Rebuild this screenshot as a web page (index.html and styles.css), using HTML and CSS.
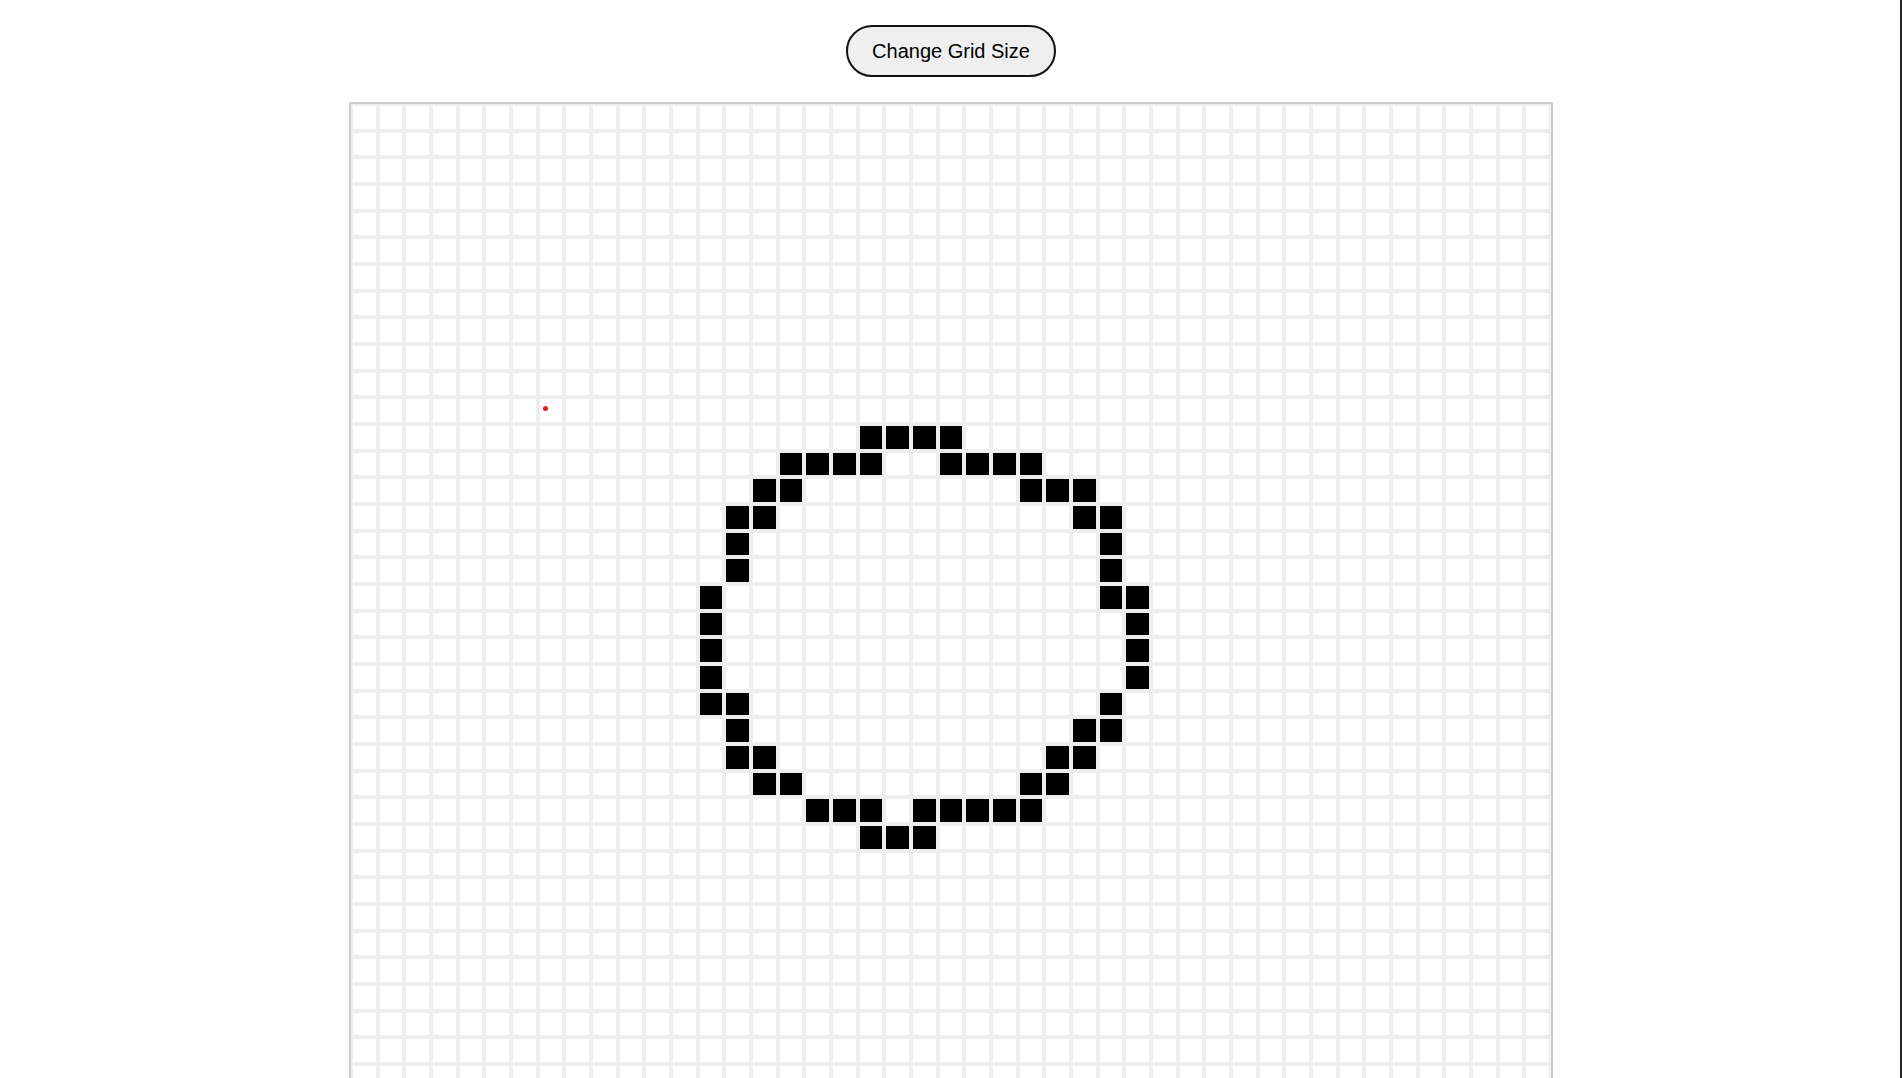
FILE: index.html
```html
<!DOCTYPE html>
<html lang="en">
<head>
<meta charset="utf-8">
<title>Etch a Sketch</title>
<link rel="stylesheet" href="styles.css">
</head>
<body>
<main class="app">
  <button class="size-btn" type="button">Change Grid Size</button>
  <div class="board">
    <div class="grid" id="grid"></div>
    <span class="cursor-dot"></span>
  </div>
</main>
<div class="edge-line"></div>
<script src="script.js"></script>
</body>
</html>
```

FILE: styles.css
```css
body {
  margin: 8px;
  background: #ffffff;
  font-family: "Liberation Sans", Arial, sans-serif;
}

.edge-line {
  position: fixed;
  top: 0;
  right: 0;
  bottom: 0;
  width: 2px;
  background: #262626;
}

.app {
  display: flex;
  flex-direction: column;
  align-items: center;
  gap: 25px;
  padding-top: 17px;
}

.size-btn {
  font-family: "Liberation Sans", Arial, sans-serif;
  font-size: 20px;
  line-height: 24px;
  color: #000;
  background: #efefef;
  border: 2px solid #111;
  border-radius: 26px;
  padding: 12px 24px;
  cursor: pointer;
}

.board {
  position: relative;
  border: 2px solid #cccccc;
}

.grid {
  width: 1200px;
  height: 1200px;
  display: grid;
  grid-template-columns: repeat(45, 1fr);
  grid-template-rows: repeat(45, 1fr);
}

.cell {
  box-sizing: border-box;
  border: 2px solid #eeeeee;
  background: #ffffff;
}

.cell.on {
  background: #000000;
}

.cursor-dot {
  position: absolute;
  left: 192px;
  top: 302px;
  width: 5px;
  height: 5px;
  border-radius: 50%;
  background: #e2201c;
}
```

FILE: script.js
```js
const N = 45;
const filled = {
  12: [19, 20, 21, 22],
  13: [16, 17, 18, 19, 22, 23, 24, 25],
  14: [15, 16, 25, 26, 27],
  15: [14, 15, 27, 28],
  16: [14, 28],
  17: [14, 28],
  18: [13, 28, 29],
  19: [13, 29],
  20: [13, 29],
  21: [13, 29],
  22: [13, 14, 28],
  23: [14, 27, 28],
  24: [14, 15, 26, 27],
  25: [15, 16, 25, 26],
  26: [17, 18, 19, 21, 22, 23, 24, 25],
  27: [19, 20, 21]
};
const grid = document.getElementById('grid');
const frag = document.createDocumentFragment();
for (let r = 0; r < N; r++) {
  const on = filled[r] || [];
  for (let c = 0; c < N; c++) {
    const d = document.createElement('div');
    d.className = on.includes(c) ? 'cell on' : 'cell';
    frag.appendChild(d);
  }
}
grid.appendChild(frag);
```
